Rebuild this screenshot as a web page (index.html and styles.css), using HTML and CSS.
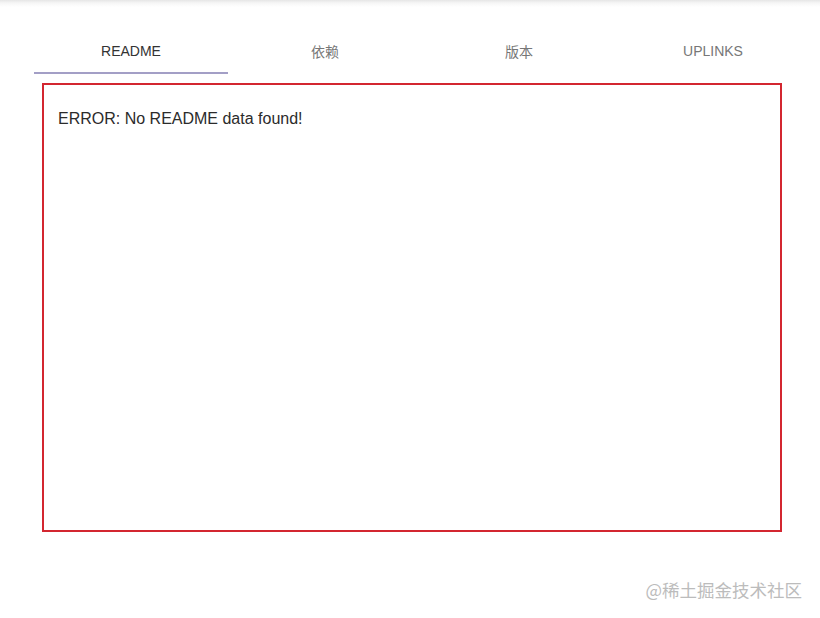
FILE: index.html
```html
<!DOCTYPE html>
<html lang="zh-CN">
<head>
    <meta charset="UTF-8">
    <meta name="viewport" content="width=device-width, initial-scale=1.0">
    <title>README</title>
    <link rel="stylesheet" href="styles.css">
</head>
<body>
    <div class="top_shadow"></div>

    <!-- 标签栏 -->
    <div class="tabs">
        <div class="tab active">README</div>
        <div class="tab">依赖</div>
        <div class="tab">版本</div>
        <div class="tab">UPLINKS</div>
    </div>

    <!-- 内容区 -->
    <div class="readme">
        <p>ERROR: No README data found!</p>
    </div>

    <div class="watermark">@稀土掘金技术社区</div>
</body>
</html>
```

FILE: styles.css
```css
*{
    margin: 0;
    padding: 0;
    box-sizing: border-box;
}
body{
    width: 820px;
    height: 618px;
    position: relative;
    background: #fff;
    font-family: "Liberation Sans", Arial, "Noto Sans CJK SC", sans-serif;
    overflow: hidden;
}
.top_shadow{
    height: 26px;
    background: linear-gradient(to bottom, #e6e6e6 0, #f6f6f6 3px, #fff 7px);
}
.tabs{
    display: flex;
    width: 776px;
    margin-left: 34px;
}
.tabs .tab{
    flex: 1;
    height: 48px;
    display: flex;
    align-items: center;
    justify-content: center;
    font-size: 14px;
    color: #777;
    border-bottom: 2px solid transparent;
    padding-top: 4px;
}
.tabs .tab.active{
    color: #333;
    border-bottom-color: #a39fc6;
}
.readme{
    width: 740px;
    height: 449px;
    margin: 9px 0 0 42px;
    border: 2px solid #d32630;
    padding: 24px 14px;
}
.readme p{
    font-size: 16px;
    line-height: 20px;
    color: #2b2b2b;
}
.watermark{
    position: absolute;
    right: 18px;
    top: 578px;
    font-size: 17.5px;
    line-height: 24px;
    color: #bcbcbc;
    font-family: "Noto Sans CJK SC", sans-serif;
}
```
